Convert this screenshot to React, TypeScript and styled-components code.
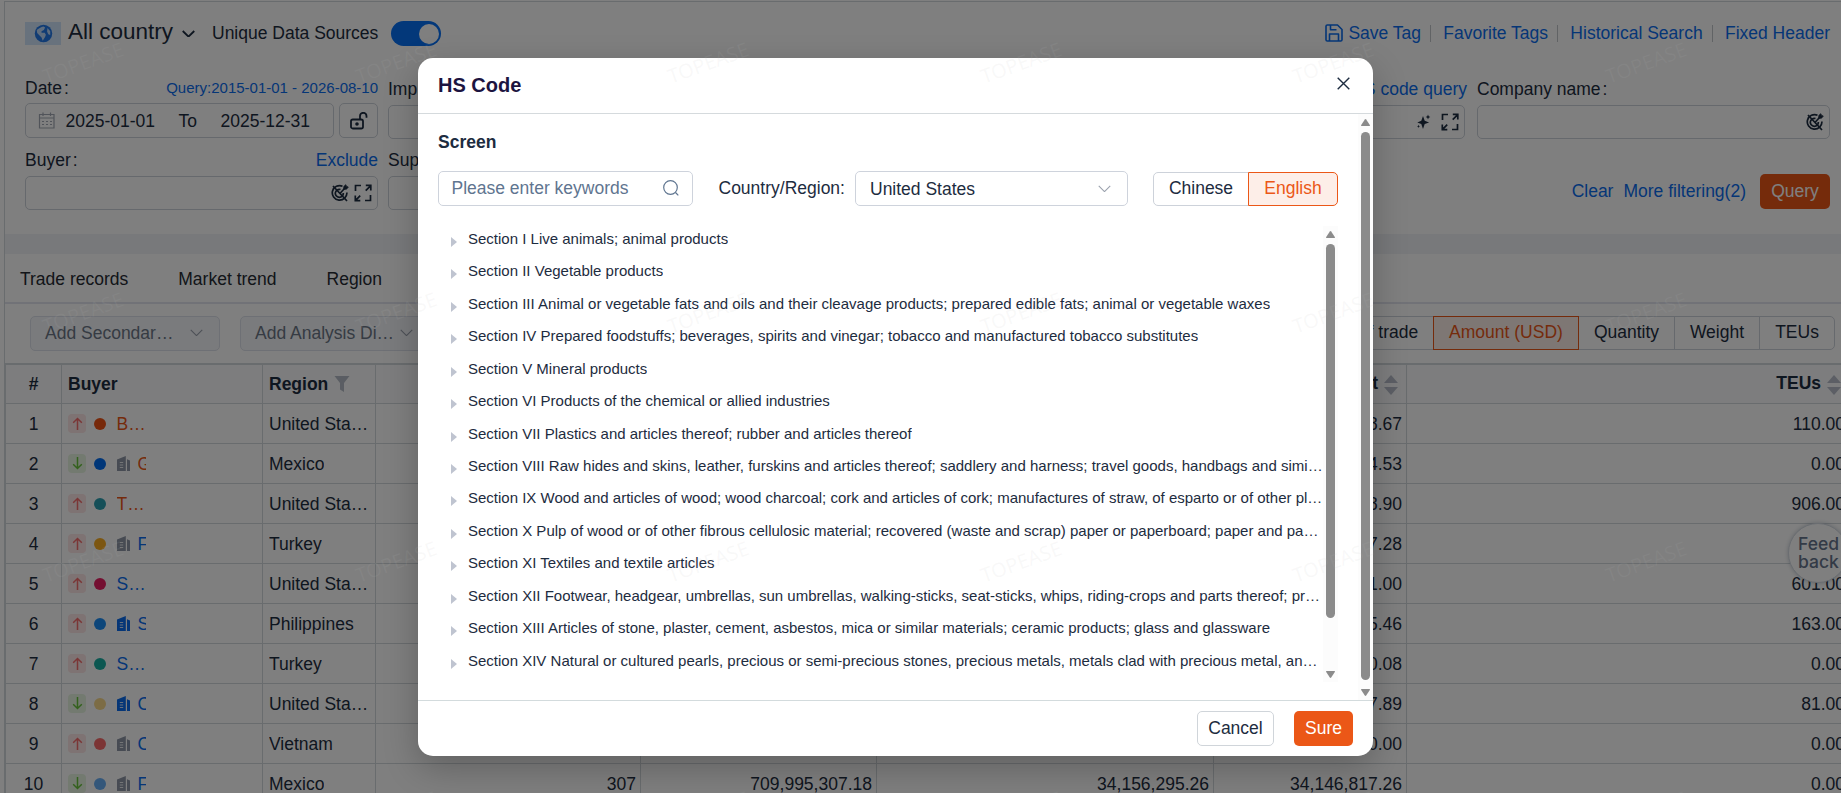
import React from "react";
import styled, { createGlobalStyle } from "styled-components";

const GlobalStyle = createGlobalStyle`
  * { box-sizing: border-box; }
  body {
    margin: 0;
    overflow: hidden;
    background: #fff;
    font-family: "Liberation Sans", Arial, sans-serif;
    font-size: 17.5px;
    line-height: 22px;
    color: #1d2c40;
  }
  svg { display: block; flex: none; }
`;

const LINK = "#0a6cee";
const ORANGE = "#eb5717";
const INK = "#1d2c40";
const LINE = "#d2d8dc";

const Screen = styled.div`
  position: relative;
  width: 1841px;
  height: 793px;
  overflow: hidden;
`;

const Page = styled.div`
  isolation: isolate;
  width: 1950px;
  height: 793px;
  padding: 1px 0 0 4px;
`;

const Content = styled.div`
  height: 100%;
  border-top: 1px solid ${LINE};
  border-left: 1px solid ${LINE};
`;

const SearchPanel = styled.section`
  width: 1836px;
  height: 232px;
  padding: 0 11px 0 20px;
`;

const TitleBar = styled.header`
  display: flex;
  align-items: center;
  height: 62px;
  padding-top: 1px;
`;

const Flag = styled.div`
  display: flex;
  align-items: center;
  justify-content: center;
  width: 36px;
  height: 23px;
  margin-right: 7px;
  background: #d1e4fb;
`;

const CountryName = styled.span`
  width: 107px;
  margin: -3px 7px 0 0;
  font-size: 22.5px;
  line-height: 30px;
  white-space: nowrap;
`;

const SourceLabel = styled.span`
  margin: -1px 13px 0 17px;
  white-space: nowrap;
`;

const Toggle = styled.div`
  display: flex;
  align-items: center;
  justify-content: flex-end;
  width: 50px;
  height: 25px;
  padding: 0 2.5px;
  border-radius: 13px;
  background: #0670f5;
  &::after {
    content: "";
    width: 20px;
    height: 20px;
    border-radius: 50%;
    background: #fff;
  }
`;

const HeaderLinks = styled.nav`
  display: flex;
  align-items: center;
  margin: -1px 0 0 auto;
  color: ${LINK};
  white-space: nowrap;
`;

const HeaderLink = styled.a`
  display: flex;
  align-items: center;
  gap: 5px;
  & + & {
    margin-left: 9.3px;
    padding-left: 12px;
    border-left: 1px solid #c2c6cb;
    line-height: 17px;
  }
`;

const FormGrid = styled.div`
  display: grid;
  grid-template-columns: repeat(5, 353px);
  column-gap: 10px;
`;

const Field = styled.div<{ $top: number }>`
  padding-top: ${(p) => p.$top}px;
  height: 76px;
`;

const FieldHead = styled.div<{ $lift?: number }>`
  display: flex;
  justify-content: space-between;
  align-items: center;
  height: 27px;
  margin-bottom: 1px;
  padding-bottom: ${(p) => (p.$lift ?? 0) * 2}px;
  white-space: nowrap;
`;

const Colon = styled.span`
  margin-left: 2px;
`;

const FieldLink = styled.a<{ $small?: boolean }>`
  color: ${LINK};
  font-size: ${(p) => (p.$small ? 15 : 17.5)}px;
`;

const Inline = styled.div`
  display: flex;
  gap: 5px;
`;

const Box = styled.div<{ $w?: number; $h?: number }>`
  display: flex;
  align-items: center;
  justify-content: flex-end;
  gap: 5px;
  width: ${(p) => p.$w ?? 353}px;
  height: ${(p) => p.$h ?? 34}px;
  padding: 0 5px;
  border: 1px solid #cdd2da;
  border-radius: 5px;
`;

const DateBox = styled(Box)`
  justify-content: flex-start;
  gap: 0;
  padding: 0 12px;
  white-space: nowrap;
`;

const DateText = styled.span<{ $w: number }>`
  width: ${(p) => p.$w}px;
  &:first-of-type { margin-left: 9.5px; }
`;

const LockBox = styled(Box)`
  justify-content: center;
`;

const FormActions = styled.div`
  grid-column: 4 / 6;
  display: flex;
  align-items: center;
  justify-content: flex-end;
  height: 34px;
  margin-top: 34px;
  color: ${LINK};
  gap: 10px;
`;

const PrimaryButton = styled.button<{ $w: number }>`
  width: ${(p) => p.$w}px;
  height: 35px;
  padding: 0 0 1px;
  border: 0;
  border-radius: 5px;
  background: ${ORANGE};
  color: #fff;
  font: inherit;
`;

const QueryButton = styled(PrimaryButton)`
  margin-left: 4px;
`;

const Band = styled.div`
  height: 20px;
  background: #f1f3f6;
`;

const Tabs = styled.nav`
  display: flex;
  gap: 50px;
  height: 50px;
  padding: 14px 15px 0;
  border-bottom: 2px solid #e2e5ef;
  color: #262b33;
`;

const Toolbar = styled.div`
  display: flex;
  align-items: flex-start;
  width: 1830px;
  height: 59px;
  padding: 12px 0 0 25px;
`;

const DimSelect = styled.div`
  display: flex;
  align-items: center;
  justify-content: space-between;
  width: 190px;
  height: 35px;
  margin-right: 20px;
  padding: 0 16px 2px 14px;
  border: 1px solid #dde1ea;
  border-radius: 5px;
  background: #f4f6fa;
  color: #6c7787;
  white-space: nowrap;
`;

const Group = styled.div`
  display: flex;
  margin-left: auto;
`;

const GroupItem = styled.div<{ $w: number; $on?: boolean }>`
  width: ${(p) => p.$w}px;
  height: 34px;
  padding-bottom: 2px;
  margin-left: -1px;
  border: 1px solid ${(p) => (p.$on ? ORANGE : "#cdd2da")};
  background: ${(p) => (p.$on ? "#fdeee8" : "#fff")};
  color: ${(p) => (p.$on ? ORANGE : INK)};
  z-index: ${(p) => (p.$on ? 1 : 0)};
  display: flex;
  align-items: center;
  justify-content: center;
  white-space: nowrap;
  &:first-child { border-radius: 5px 0 0 5px; }
  &:last-child { border-radius: 0 5px 5px 0; }
`;

const Table = styled.div`
  width: 1846px;
  border-top: 2px solid ${LINE};
  border-left: 1px solid ${LINE};
`;

const Row = styled.div<{ $head?: boolean }>`
  display: grid;
  grid-template-columns: 56px 201px 113px 265px 236px 337px 193px 443px;
  height: ${(p) => (p.$head ? 39 : 40)}px;
  font-weight: ${(p) => (p.$head ? 700 : 400)};
  background: ${(p) => (p.$head ? "#fafbfc" : "#fff")};
`;

const Cell = styled.div<{ $align?: string }>`
  display: flex;
  align-items: center;
  justify-content: ${(p) => p.$align ?? "flex-start"};
  overflow: hidden;
  padding: 0 ${(p) => (p.$align === "center" ? 5 : 4)}px 0 ${(p) => (p.$align === "center" ? 5 : 6)}px;
  border-right: 1px solid ${LINE};
  border-bottom: 1px solid ${LINE};
  white-space: nowrap;
`;

const Clip = styled.span`
  overflow: hidden;
  text-overflow: ellipsis;
  white-space: nowrap;
`;

const Badge = styled.span<{ $up: boolean }>`
  display: flex;
  align-items: center;
  justify-content: center;
  flex: none;
  width: 18px;
  height: 19px;
  border-radius: 4px;
  color: ${(p) => (p.$up ? "#f56c6c" : "#67c23a")};
  background: ${(p) => (p.$up ? "#fde6e6" : "#e7f5e1")};
`;

const Dot = styled.span<{ $color: string }>`
  flex: none;
  width: 12px;
  height: 12px;
  margin: 0 10.5px 0 8px;
  border-radius: 50%;
  background: ${(p) => p.$color};
`;

const Name = styled.span<{ $color: string; $w: number }>`
  width: ${(p) => p.$w}px;
  overflow: hidden;
  color: ${(p) => p.$color};
`;

const SortHead = styled.span`
  display: flex;
  align-items: center;
  gap: 6px;
  margin: -3px 4px 0 0;
  svg { margin-top: 4px; }
`;

const Feedback = styled.div`
  position: absolute;
  left: 1788px;
  top: 523px;
  width: 60px;
  height: 60px;
  padding: 11px 0 0 9px;
  border: 1px solid #d5dbe3;
  border-radius: 50%;
  background: #fff;
  box-shadow: 0 0 4px rgba(60, 80, 110, 0.3);
  color: #66758d;
  font: 500 17.5px/17.5px Inter, sans-serif;
`;

const Mask = styled.div`
  position: absolute;
  inset: 0;
  background: rgba(0, 0, 0, 0.5);
`;

const Modal = styled.div`
  position: absolute;
  left: 418px;
  top: 58px;
  width: 955px;
  height: 698px;
  display: flex;
  flex-direction: column;
  overflow: hidden;
  border-radius: 15px;
  background: #fff;
`;

const ModalShadow = styled.div`
  position: absolute;
  left: 418px;
  top: 58px;
  width: 955px;
  height: 698px;
  border-radius: 15px;
  box-shadow: 0 12px 35px rgba(0, 0, 0, 0.24);
`;

const ModalHead = styled.header`
  display: flex;
  align-items: center;
  justify-content: space-between;
  height: 56px;
  padding: 0 23.5px 1px 20px;
  border-bottom: 1px solid #d5dadd;
  font-size: 20px;
  font-weight: 700;
  color: #1c1440;
  svg { margin-top: -4px; }
`;

const ModalBody = styled.div`
  display: flex;
  flex: 1;
  min-height: 0;
`;

const BodyMain = styled.div`
  flex: 1;
  min-width: 0;
  padding: 17px 20px 0 20px;
`;

const ScreenTitle = styled.h3`
  margin: 0 0 18px;
  font-size: 17.5px;
  line-height: 22px;
`;

const FilterLine = styled.div`
  display: flex;
  align-items: center;
  height: 35px;
  white-space: nowrap;
`;

const Input = styled.div<{ $w: number }>`
  display: flex;
  align-items: center;
  justify-content: space-between;
  width: ${(p) => p.$w}px;
  height: 35px;
  padding: 0 13px 1px 12.5px;
  border: 1px solid #ced3dc;
  border-radius: 5px;
`;

const SelectInput = styled(Input)`
  padding: 0 16.5px 0 14px;
`;

const Placeholder = styled.span`
  color: #5f7590;
  margin-top: -1px;
`;

const FilterLabel = styled.label`
  margin: -2px 9.5px 0 25.5px;
  width: 127px;
`;

const LangGroup = styled(Group)`
  margin-top: 1px;
`;

const TreeWrap = styled.div`
  display: flex;
  height: 456px;
  margin-top: 20px;
`;

const Tree = styled.div`
  flex: 1;
  min-width: 0;
  margin: -0.4px -2px 0 0;
  padding-left: 6px;
  overflow: hidden;
`;

const TreeRow = styled.div`
  display: flex;
  align-items: center;
  height: 32.46px;
  padding: 0 0 6px 7px;
  font-size: 15px;
  line-height: 20px;
  svg { margin: 6px 11px 0 0; }
`;

const Track = styled.div`
  display: flex;
  flex-direction: column;
  align-items: center;
  width: 15px;
  padding: 5px 0 4px;
  background: #fcfcfc;
`;

const Thumb = styled.div<{ $h: number }>`
  width: 9px;
  height: ${(p) => p.$h}px;
  margin: 6px 0 auto;
  border-radius: 4.5px;
  background: #8b8b8b;
`;

const ModalFoot = styled.footer`
  display: flex;
  justify-content: flex-end;
  gap: 20px;
  height: 56px;
  padding: 10px 20px 0 0;
  border-top: 1px solid #d3dbdd;
`;

const PlainButton = styled.button`
  width: 77px;
  height: 35px;
  padding: 0 0 1px;
  border: 1px solid #d0d5da;
  border-radius: 5px;
  background: #fff;
  color: ${INK};
  font: inherit;
`;

const WatermarkLayer = styled.div`
  position: absolute;
  left: -73px;
  top: -62px;
  display: grid;
  grid-template-columns: repeat(7, 312.5px);
  grid-auto-rows: 249.6px;
  pointer-events: none;
`;

const Watermark = styled.span`
  display: flex;
  align-items: center;
  justify-content: center;
  transform: rotate(-20deg);
  font: 400 20px/24px "Noto Sans", sans-serif;
  color: rgba(190, 190, 190, 0.09);
`;

const Chevron = ({ w = 13, color = "#9aa1ad", stroke = 1.1 }: { w?: number; color?: string; stroke?: number }) => (
  <svg width={w} height={w * 0.6} viewBox="0 0 13 8" fill="none" stroke={color} strokeWidth={stroke}>
    <path d="M.6 1l5.9 5.8L12.4 1" />
  </svg>
);

const Globe = () => (
  <svg width="19" height="19" viewBox="0 0 24 24">
    <circle cx="12" cy="12" r="11" fill="#2278e8" />
    <path d="M3.5 7.5c2-1.500 5.500-3.800 8.500-4.500l2 1.500-1.500 3-3 1.500v2h4l1.500 2.500-1 3-3 4.500-1.500-4-2.500-2.500-3-3zM17 5l3.500 4v5l-2.500-1-1.500-3.500z" fill="#bcd9fb" />
  </svg>
);

const SaveIcon = () => (
  <svg width="18" height="18" viewBox="0 0 18 18" fill="none" stroke={LINK} strokeWidth="1.6" strokeLinejoin="round">
    <path d="M2.300 1h10.200l4.500 4.500v10.200q0 1.300-1.300 1.300H2.300Q1 17 1 15.700V2.300Q1 1 2.300 1z" />
    <path d="M4.500 17v-7h9v7M5.500 1v4.800h6" />
  </svg>
);

const CalendarIcon = () => (
  <svg width="18" height="17" viewBox="0 0 18 17" fill="none" stroke="#a2a9b4" strokeWidth="1.200">
    <path d="M1.500 2.500h14.500v13.500h-14.500zM1.500 6h14.500M5 .5v3.500M12.500 .5v3.500" />
    <path d="M4 9.500h2M8 9.500h2M12 9.500h2M4 12.500h2M8 12.500h2M12 12.500h2" />
  </svg>
);

const LockIcon = () => (
  <svg width="18" height="18" viewBox="0 0 18 18" fill="none" stroke={INK} strokeWidth="1.800">
    <rect x="1" y="7.500" width="12" height="9" rx="1.800" />
    <path d="M10 7.500V4a3.200 3.200 0 0 1 6.500 0v1.800" />
    <circle cx="7" cy="12" r=".9" fill={INK} />
  </svg>
);

const TargetIcon = () => (
  <svg width="18" height="18" viewBox="0 0 18 18" fill="none" stroke={INK} strokeWidth="1.700">
    <path d="M11.500 2.200A7.300 7.300 0 1 0 15.900 8.500M9.500 5.500A4 4 0 1 0 12.300 9" />
    <path d="M2 2l14 15M8.500 10l5-5.500" />
    <path d="M12.800 5.200V2.500l2-1.800.7 1.700 1.800.6-1.800 2.200z" fill={INK} strokeWidth=".8" />
  </svg>
);

const ExpandIcon = () => (
  <svg width="18" height="18" viewBox="0 0 18 18" fill="none" stroke={INK} strokeWidth="1.700">
    <path d="M1.500 7V1.500H7M11 16.500h5.500V11M11.800 1.400h5v5M16.500 1.800l-4.800 4.800M1.300 11.600v5h5M1.600 16.300l4.600-4.600" />
  </svg>
);

const SparkIcon = () => (
  <svg width="15" height="16" viewBox="0 0 14 16" fill={INK}>
    <path d="M6.500 2l1.700 4.800 4.400 1.700-4.400 1.600-1.700 5-1.700-5L.8 8.500l4-1.700zM11.500.6l.7 1.700 1.600.7-1.600.7-.7 1.700-.7-1.700L9.200 3l1.600-.7zM2 10.800l.5 1.100 1.100.4-1.100.5L2 14l-.5-1.200-1.100-.5 1.100-.4z" />
  </svg>
);

const Funnel = styled.svg`
  margin-left: 1px;
`;

const FunnelIcon = () => (
  <Funnel width="16" height="16" viewBox="0 0 16 16" fill="#b5bbc6">
    <path d="M.5 0h15L10 7v9l-4-2.500V7z" />
  </Funnel>
);

const SortIcon = () => (
  <svg width="14" height="20" viewBox="0 0 14 20" fill="#b8bdca">
    <path d="M7 0l7 8H0zM7 20l7-8H0z" />
  </svg>
);

const ArrowIcon = ({ up }: { up: boolean }) => (
  <svg width="11" height="13" viewBox="0 0 11 13" fill="none" stroke="currentColor" strokeWidth="1.500">
    <path d={up ? "M5.500 13V1.500M1.200 5.700L5.500 1.500l4.300 4.200" : "M5.500 0v11.500M1.200 7.300l4.300 4.200 4.300-4.200"} />
  </svg>
);

const Building = styled.svg`
  margin-right: 8px;
`;

const BuildingIcon = ({ color }: { color: string }) => (
  <Building width="13" height="15" viewBox="0 0 13 15">
    <path d="M0 3.500L8.800 0v15H0zM10 3.200l3 1.200V15h-3z" fill={color} />
    <path d="M2.800 6.500h3.400M2.800 9h3.400M2.800 11.500h3.400" stroke="#fff" strokeWidth="1" opacity=".8" />
  </Building>
);

const Caret = () => (
  <svg width="6" height="10" viewBox="0 0 6 10" fill="#bfc4d0">
    <path d="M0 0l6 5-6 5z" />
  </svg>
);

const ScrollArrow = ({ down }: { down?: boolean }) => (
  <svg width="9" height="7" viewBox="0 0 9 7" fill="#8b8b8b">
    <path d={down ? "M.5 0h8q.8 0 .3 1L5.200 6.500q-.7.8-1.400 0L.2 1Q-.3 0 .5 0z" : "M.5 7h8q.8 0 .3-1L5.200.5q-.7-.8-1.400 0L.2 6Q-.3 7 .5 7z"} />
  </svg>
);

const SearchIcon = () => (
  <svg width="16" height="16" viewBox="0 0 16 16" fill="none" stroke="#5f7590" strokeWidth="1.200">
    <circle cx="7.500" cy="7.500" r="6.800" />
    <path d="M12.500 12.500l2.800 2.800" />
  </svg>
);

const CloseIcon = () => (
  <svg width="13" height="13" viewBox="0 0 13 13" stroke={INK} strokeWidth="1.400">
    <path d="M.7.7l11.600 11.600M12.300.7L.7 12.300" />
  </svg>
);

type Buyer = {
  up: boolean;
  dot: string;
  building?: string;
  name: string;
  color: string;
  region: string;
  amounts: string[];
  teus: string;
};

const GREY = "#8e97a6";
const buyers: Buyer[] = [
  { up: true, dot: "#ee5215", name: "B…", color: ORANGE, region: "United States", amounts: ["", "", "", "8.67"], teus: "110.00" },
  { up: false, dot: "#006cf0", building: GREY, name: "G", color: ORANGE, region: "Mexico", amounts: ["", "", "", "4.53"], teus: "0.00" },
  { up: true, dot: "#2a9fb0", name: "T…", color: ORANGE, region: "United States", amounts: ["", "", "", "8.90"], teus: "906.00" },
  { up: true, dot: "#f8ad22", building: GREY, name: "F", color: LINK, region: "Turkey", amounts: ["", "", "", "7.28"], teus: "0.00" },
  { up: true, dot: "#e81f62", name: "S…", color: LINK, region: "United States", amounts: ["", "", "", "1.00"], teus: "601.00" },
  { up: true, dot: "#1b8df5", building: LINK, name: "S", color: LINK, region: "Philippines", amounts: ["", "", "", "5.46"], teus: "163.00" },
  { up: true, dot: "#18aea3", name: "S…", color: LINK, region: "Turkey", amounts: ["", "", "", "0.08"], teus: "0.00" },
  { up: false, dot: "#f9d98a", building: LINK, name: "C", color: LINK, region: "United States", amounts: ["", "", "", "7.89"], teus: "81.00" },
  { up: true, dot: "#f96b6b", building: GREY, name: "C", color: LINK, region: "Vietnam", amounts: ["", "", "", "0.00"], teus: "0.00" },
  { up: false, dot: "#68aef5", building: GREY, name: "F", color: LINK, region: "Mexico", amounts: ["307", "709,995,307.18", "34,156,295.26", "34,146,817.26"], teus: "0.00" },
];

const sections = [
  "Section I Live animals; animal products",
  "Section II Vegetable products",
  "Section III Animal or vegetable fats and oils and their cleavage products; prepared edible fats; animal or vegetable waxes",
  "Section IV Prepared foodstuffs; beverages, spirits and vinegar; tobacco and manufactured tobacco substitutes",
  "Section V Mineral products",
  "Section VI Products of the chemical or allied industries",
  "Section VII Plastics and articles thereof; rubber and articles thereof",
  "Section VIII Raw hides and skins, leather, furskins and articles thereof; saddlery and harness; travel goods, handbags and similar containers",
  "Section IX Wood and articles of wood; wood charcoal; cork and articles of cork; manufactures of straw, of esparto or of other plaiting materials",
  "Section X Pulp of wood or of other fibrous cellulosic material; recovered (waste and scrap) paper or paperboard; paper and paperboard and articles thereof",
  "Section XI Textiles and textile articles",
  "Section XII Footwear, headgear, umbrellas, sun umbrellas, walking-sticks, seat-sticks, whips, riding-crops and parts thereof; prepared feathers",
  "Section XIII Articles of stone, plaster, cement, asbestos, mica or similar materials; ceramic products; glass and glassware",
  "Section XIV Natural or cultured pearls, precious or semi-precious stones, precious metals, metals clad with precious metal, and articles thereof",
];

const FieldLabel = ({ children }: { children: React.ReactNode }) => (
  <span>
    {children}
    <Colon>:</Colon>
  </span>
);

export default function App() {
  return (
    <Screen>
      <GlobalStyle />
      <Page>
        <Content>
          <SearchPanel>
            <TitleBar>
              <Flag><Globe /></Flag>
              <CountryName>All country</CountryName>
              <Chevron color={INK} stroke={1.9} />
              <SourceLabel>Unique Data Sources</SourceLabel>
              <Toggle />
              <HeaderLinks>
                <HeaderLink><SaveIcon />Save Tag</HeaderLink>
                <HeaderLink>Favorite Tags</HeaderLink>
                <HeaderLink>Historical Search</HeaderLink>
                <HeaderLink>Fixed Header</HeaderLink>
              </HeaderLinks>
            </TitleBar>
            <FormGrid>
              <Field $top={11}>
                <FieldHead $lift={0.5}>
                  <FieldLabel>Date</FieldLabel>
                  <FieldLink $small>Query:2015-01-01 - 2026-08-10</FieldLink>
                </FieldHead>
                <Inline>
                  <DateBox $w={309} $h={35}>
                    <CalendarIcon />
                    <DateText $w={113}>2025-01-01</DateText>
                    <DateText $w={42}>To</DateText>
                    <DateText $w={95}>2025-12-31</DateText>
                  </DateBox>
                  <LockBox $w={39} $h={35}><LockIcon /></LockBox>
                </Inline>
              </Field>
              <Field $top={13}>
                <FieldHead $lift={2}><FieldLabel>Imp</FieldLabel></FieldHead>
                <Box />
              </Field>
              <Field $top={13} />
              <Field $top={13}>
                <FieldHead $lift={2}><span /><FieldLink>HS code query</FieldLink></FieldHead>
                <Box $w={351}>
                  <SparkIcon />
                  <span />
                  <ExpandIcon />
                </Box>
              </Field>
              <Field $top={13}>
                <FieldHead $lift={2}><FieldLabel>Company name</FieldLabel></FieldHead>
                <Box><TargetIcon /></Box>
              </Field>
              <Field $top={8}>
                <FieldHead $lift={2}>
                  <FieldLabel>Buyer</FieldLabel>
                  <FieldLink>Exclude</FieldLink>
                </FieldHead>
                <Box><TargetIcon /><ExpandIcon /></Box>
              </Field>
              <Field $top={8}>
                <FieldHead $lift={2}><FieldLabel>Supplier</FieldLabel></FieldHead>
                <Box />
              </Field>
              <FormActions>
                <a>Clear</a>
                <a>More filtering(2)</a>
                <QueryButton $w={70}>Query</QueryButton>
              </FormActions>
            </FormGrid>
          </SearchPanel>
          <Band />
          <Tabs>
            <span>Trade records</span>
            <span>Market trend</span>
            <span>Region</span>
          </Tabs>
          <Toolbar>
            <DimSelect>Add Secondar…<Chevron /></DimSelect>
            <DimSelect>Add Analysis Di…<Chevron /></DimSelect>
            <Group>
              <GroupItem $w={158}>Number of trade</GroupItem>
              <GroupItem $w={146} $on>Amount (USD)</GroupItem>
              <GroupItem $w={97}>Quantity</GroupItem>
              <GroupItem $w={86}>Weight</GroupItem>
              <GroupItem $w={76}>TEUs</GroupItem>
            </Group>
          </Toolbar>
          <Table>
            <Row $head>
              <Cell $align="center">#</Cell>
              <Cell>Buyer</Cell>
              <Cell>Region&nbsp;<FunnelIcon /></Cell>
              <Cell /><Cell /><Cell />
              <Cell $align="flex-end"><SortHead>Weight<SortIcon /></SortHead></Cell>
              <Cell $align="flex-end"><SortHead>TEUs<SortIcon /></SortHead></Cell>
            </Row>
            {buyers.map((b, i) => (
              <Row key={i}>
                <Cell $align="center">{i + 1}</Cell>
                <Cell>
                  <Badge $up={b.up}><ArrowIcon up={b.up} /></Badge>
                  <Dot $color={b.dot} />
                  {b.building && <BuildingIcon color={b.building} />}
                  <Name $color={b.color} $w={b.building ? 8 : 32}>{b.name}</Name>
                </Cell>
                <Cell><Clip>{b.region}</Clip></Cell>
                {b.amounts.map((a, j) => <Cell key={j} $align="flex-end">{a}</Cell>)}
                <Cell $align="flex-end">{b.teus}</Cell>
              </Row>
            ))}
          </Table>
        </Content>
      </Page>
      <Feedback>Feed<br />back</Feedback>
      <Mask />
      <ModalShadow />
      <Modal>
        <ModalHead>HS Code<CloseIcon /></ModalHead>
        <ModalBody>
          <BodyMain>
            <ScreenTitle>Screen</ScreenTitle>
            <FilterLine>
              <Input $w={255}><Placeholder>Please enter keywords</Placeholder><SearchIcon /></Input>
              <FilterLabel>Country/Region:</FilterLabel>
              <SelectInput $w={273}>United States<Chevron /></SelectInput>
              <LangGroup>
                <GroupItem $w={96}>Chinese</GroupItem>
                <GroupItem $w={90} $on>English</GroupItem>
              </LangGroup>
            </FilterLine>
            <TreeWrap>
              <Tree>
                {sections.map((s) => (
                  <TreeRow key={s}><Caret /><Clip>{s}</Clip></TreeRow>
                ))}
              </Tree>
              <Track><ScrollArrow /><Thumb $h={374} /><ScrollArrow down /></Track>
            </TreeWrap>
          </BodyMain>
          <Track><ScrollArrow /><Thumb $h={548} /><ScrollArrow down /></Track>
        </ModalBody>
        <ModalFoot>
          <PlainButton>Cancel</PlainButton>
          <PrimaryButton $w={59}>Sure</PrimaryButton>
        </ModalFoot>
      </Modal>
      <WatermarkLayer>
        {Array.from({ length: 28 }, (_, i) => <Watermark key={i}>TOPEASE</Watermark>)}
      </WatermarkLayer>
    </Screen>
  );
}
